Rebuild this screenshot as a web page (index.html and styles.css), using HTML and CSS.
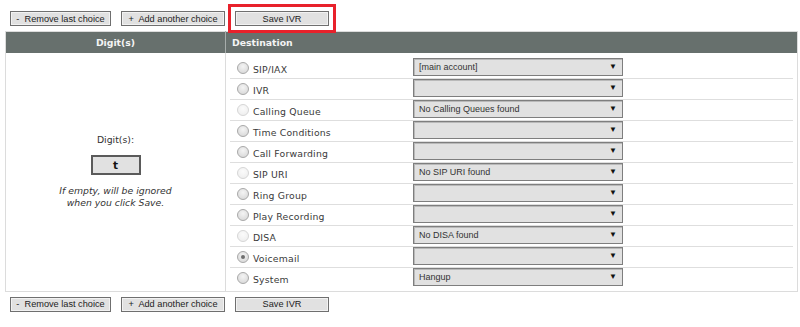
FILE: index.html
```html
<!DOCTYPE html>
<html lang="en">
<head>
  <meta charset="UTF-8">
  <title>IVR</title>
  <link rel="stylesheet" href="styles.css">
</head>
<body>
  <div class="toolbar">
    <button class="btn">-&nbsp; Remove last choice</button>
    <button class="btn">+&nbsp; Add another choice</button>
    <button class="btn btn-save btn-marked">Save IVR</button>
  </div>

  <table class="ivr-table">
    <colgroup>
      <col class="col-digit">
      <col>
    </colgroup>
    <thead>
      <tr>
        <th class="th-digit">Digit(s)</th>
        <th class="th-dest">Destination</th>
      </tr>
    </thead>
    <tbody>
      <tr>
        <td class="digit-cell">
          <div class="digit-label">Digit(s):</div>
          <div class="digit-input">t</div>
          <div class="digit-note">If empty, will be ignored<br>when you click Save.</div>
        </td>
        <td class="dest-cell">
          <div class="dest-row">
            <span class="radio"></span><span class="dest-name">SIP/IAX</span>
            <span class="select">[main account]</span>
          </div>
          <div class="dest-row">
            <span class="radio"></span><span class="dest-name">IVR</span>
            <span class="select"></span>
          </div>
          <div class="dest-row">
            <span class="radio radio-off"></span><span class="dest-name">Calling Queue</span>
            <span class="select">No Calling Queues found</span>
          </div>
          <div class="dest-row">
            <span class="radio"></span><span class="dest-name">Time Conditions</span>
            <span class="select"></span>
          </div>
          <div class="dest-row">
            <span class="radio"></span><span class="dest-name">Call Forwarding</span>
            <span class="select"></span>
          </div>
          <div class="dest-row">
            <span class="radio radio-off"></span><span class="dest-name">SIP URI</span>
            <span class="select">No SIP URI found</span>
          </div>
          <div class="dest-row">
            <span class="radio"></span><span class="dest-name">Ring Group</span>
            <span class="select"></span>
          </div>
          <div class="dest-row">
            <span class="radio"></span><span class="dest-name">Play Recording</span>
            <span class="select"></span>
          </div>
          <div class="dest-row">
            <span class="radio radio-off"></span><span class="dest-name">DISA</span>
            <span class="select">No DISA found</span>
          </div>
          <div class="dest-row">
            <span class="radio radio-on"></span><span class="dest-name">Voicemail</span>
            <span class="select"></span>
          </div>
          <div class="dest-row">
            <span class="radio"></span><span class="dest-name">System</span>
            <span class="select">Hangup</span>
          </div>
        </td>
      </tr>
    </tbody>
  </table>

  <div class="toolbar toolbar-bottom">
    <button class="btn">-&nbsp; Remove last choice</button>
    <button class="btn">+&nbsp; Add another choice</button>
    <button class="btn btn-save">Save IVR</button>
  </div>
</body>
</html>
```

FILE: styles.css
```css
* {
  box-sizing: border-box;
}
body {
  margin: 0;
  background: #fff;
  font-family: 'DejaVu Sans', Verdana, sans-serif;
  font-size: 9.3px;
  color: #333;
}
.toolbar {
  display: flex;
  gap: 10px;
  padding: 11px 0 0 10px;
}
.toolbar-bottom {
  padding-top: 5px;
}
.btn {
  height: 15px;
  margin: 0;
  padding: 0;
  white-space: nowrap;
  font-family: 'Liberation Sans', Arial, sans-serif;
  font-size: 9.2px;
  color: #222;
  background: #e1e1e1;
  border: 1px solid #6f6f6f;
  box-shadow: inset 0 0 0 1px #f2f2f2;
  border-radius: 0;
  line-height: 12px;
}
.toolbar .btn:nth-child(1) {
  width: 101px;
}
.toolbar .btn:nth-child(2) {
  width: 104px;
}
.btn-save {
  width: 94px;
}
.btn-marked {
  outline: 3px solid #e8212b;
  outline-offset: 4px;
}
.ivr-table {
  margin: 5px 0 0 5px;
  width: 793px;
  border-collapse: collapse;
  table-layout: fixed;
  border: 1px solid #dcdcdc;
}
.col-digit {
  width: 220px;
}
.ivr-table th {
  height: 21px;
  padding: 0;
  background: #67706d;
  color: #f4f4f4;
  font-weight: bold;
  font-size: 9.3px;
}
.th-digit {
  text-align: center;
  border-right: 1px solid #a7adab;
}
.th-dest {
  text-align: left;
  padding-left: 6px !important;
}
.digit-cell {
  text-align: center;
  vertical-align: middle;
  border-right: 1px solid #dcdcdc;
  padding: 0;
}
.digit-label {
  margin-bottom: 10px;
}
.digit-input {
  width: 50px;
  height: 20px;
  margin: 0 auto;
  border: 2px solid #5a5a5a;
  background: #e1e1e1;
  font-weight: bold;
  font-size: 10.5px;
  line-height: 16px;
  color: #111;
}
.digit-note {
  margin-top: 10px;
  font-style: italic;
  line-height: 12px;
  color: #333;
}
.dest-cell {
  padding: 5px 4px 3px 4px;
  vertical-align: top;
}
.dest-row {
  display: flex;
  align-items: center;
  height: 21px;
  padding-left: 7px;
  border-bottom: 1px solid #dedede;
}
.dest-row:last-child {
  border-bottom: none;
  height: 20px;
}
.dest-name {
  width: 164px;
  padding-left: 4px;
  padding-top: 3px;
  color: #3a3a3a;
  letter-spacing: 0.2px;
}
.radio {
  width: 12px;
  height: 12px;
  border-radius: 50%;
  border: 1px solid #a9a9a9;
  background: radial-gradient(circle at 50% 35%, #f4f4f4, #d4d4d4);
  flex-shrink: 0;
}
.radio-off {
  border-color: #d6d6d6;
  background: radial-gradient(circle at 50% 35%, #fbfbfb, #ececec);
}
.radio-on {
  position: relative;
}
.radio-on::after {
  content: '';
  position: absolute;
  left: 3px;
  top: 3px;
  width: 4px;
  height: 4px;
  border-radius: 50%;
  background: #6e6e6e;
}
.select {
  position: relative;
  width: 210px;
  height: 18px;
  margin-top: -1px;
  padding-left: 5px;
  background: #e1e1e1;
  border: 1px solid #7e7e7e;
  box-shadow: inset 1px 1px 0 #b9b9b9;
  font-family: 'Liberation Sans', Arial, sans-serif;
  font-size: 9px;
  line-height: 16px;
  color: #333;
}
.select::after {
  content: '\25BC';
  position: absolute;
  right: 5px;
  top: 0;
  font-size: 8px;
  color: #111;
}
```
